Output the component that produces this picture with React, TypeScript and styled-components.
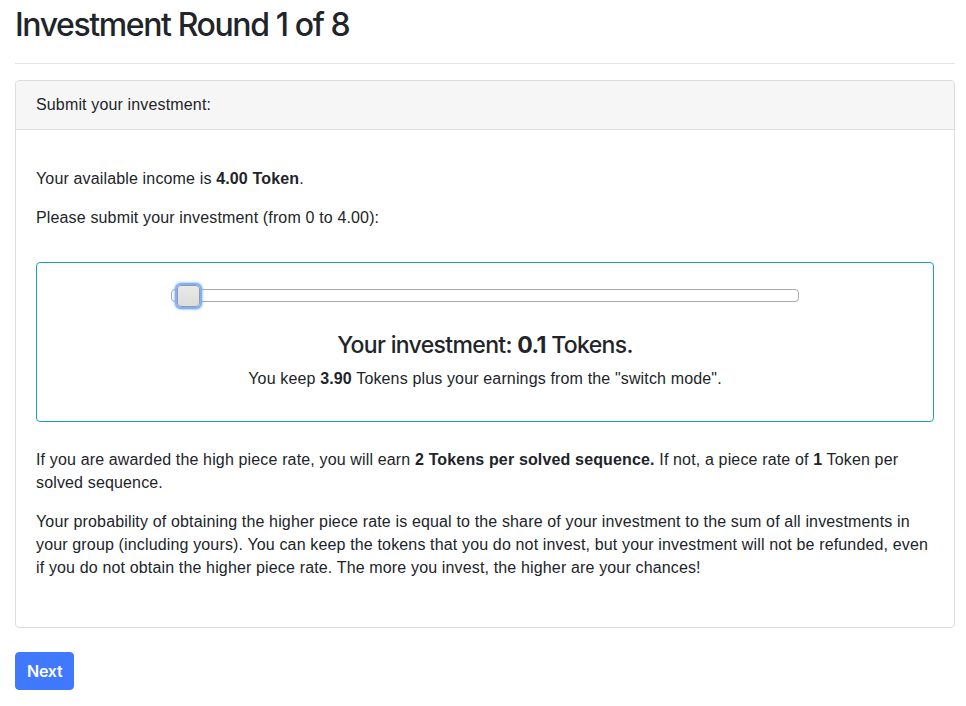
import React from 'react';
import styled, { createGlobalStyle } from 'styled-components';

const GlobalStyle = createGlobalStyle`
  html, body {
    margin: 0;
    padding: 0;
    background: #fff;
  }
  body {
    font-family: "Liberation Sans", Arial, sans-serif;
    font-size: 16px;
    line-height: 23px;
    letter-spacing: 0.15px;
    color: #212529;
  }
  * {
    box-sizing: border-box;
  }
`;

const Page = styled.div`
  padding: 0 11px 0 15px;
`;

const Title = styled.h2`
  font-family: Inter, "Liberation Sans", sans-serif;
  font-size: 32px;
  font-weight: 500;
  line-height: 1.2;
  margin: 6px 0 0;
  letter-spacing: -1.4px;
`;

const Rule = styled.hr`
  border: 0;
  border-top: 1px solid #e5e5e5;
  margin: 19px 0 16px;
`;

const Card = styled.div`
  border: 1px solid #dcdcdc;
  border-radius: 4px;
  background: #fff;
`;

const CardHeader = styled.div`
  padding: 12px 20px 13px;
  background: #f6f6f6;
  border-bottom: 1px solid #dcdcdc;
  border-radius: 3px 3px 0 0;
`;

const CardBody = styled.div`
  padding: 37px 20px 32px;
`;

const Para = styled.p`
  margin: 0 0 16px;
`;

const SliderBox = styled.div`
  border: 1px solid #17a2b8;
  border-radius: 4px;
  margin: 33px 0 26px;
  padding: 26px 0 31px;
  display: flex;
  flex-direction: column;
  align-items: center;
`;

const Track = styled.div`
  position: relative;
  width: 70%;
  height: 13px;
  border: 1px solid #aaa;
  border-radius: 4px;
  background: #fff;
`;

const Thumb = styled.div`
  position: absolute;
  top: -5px;
  width: 23px;
  height: 22px;
  border: 1px solid #999;
  border-radius: 4px;
  background: linear-gradient(#e9e9e9, #dcdcdc);
  box-shadow: 0 0 0 2px #7fb0ff, 0 0 2px 3px rgba(90, 150, 255, 0.45);
`;

const InvestmentLine = styled.div`
  font-family: Inter, "Liberation Sans", sans-serif;
  font-size: 23px;
  font-weight: 500;
  line-height: 1.2;
  margin-top: 30px;
  letter-spacing: -0.65px;
`;

const KeepLine = styled.div`
  margin-top: 7px;
`;

const NextButton = styled.button`
  margin-top: 24px;
  height: 38px;
  padding: 0 11px;
  font-family: Inter, "Liberation Sans", sans-serif;
  font-size: 16px;
  font-weight: 600;
  letter-spacing: -0.2px;
  color: #fff;
  background: #4079fd;
  border: 1px solid #4079fd;
  border-radius: 4px;
  cursor: pointer;
`;

const income = 4;
const invested = 0.1;

function App() {
  const pct = (invested / income) * 100;
  return (
    <>
      <GlobalStyle />
      <Page>
        <Title>Investment Round 1 of 8</Title>
        <Rule />
        <Card>
          <CardHeader>Submit your investment:</CardHeader>
          <CardBody>
            <Para>
              Your available income is <b>{income.toFixed(2)} Token</b>.
            </Para>
            <Para>Please submit your investment (from 0 to {income.toFixed(2)}):</Para>
            <SliderBox>
              <Track>
                <Thumb style={{ left: `calc(${pct}% - 11px)` }} />
              </Track>
              <InvestmentLine>
                Your investment: <b>{invested}</b> Tokens.
              </InvestmentLine>
              <KeepLine>
                You keep <b>{(income - invested).toFixed(2)}</b> Tokens plus your earnings from the "switch mode".
              </KeepLine>
            </SliderBox>
            <Para>
              If you are awarded the high piece rate, you will earn <b>2 Tokens per solved sequence.</b> If not, a
              piece rate of <b>1</b> Token per solved sequence.
            </Para>
            <Para>
              Your probability of obtaining the higher piece rate is equal to the share of your investment to the sum
              of all investments in your group (including yours). You can keep the tokens that you do not invest, but
              your investment will not be refunded, even if you do not obtain the higher piece rate. The more you
              invest, the higher are your chances!
            </Para>
          </CardBody>
        </Card>
        <NextButton>Next</NextButton>
      </Page>
    </>
  );
}

export default App;
